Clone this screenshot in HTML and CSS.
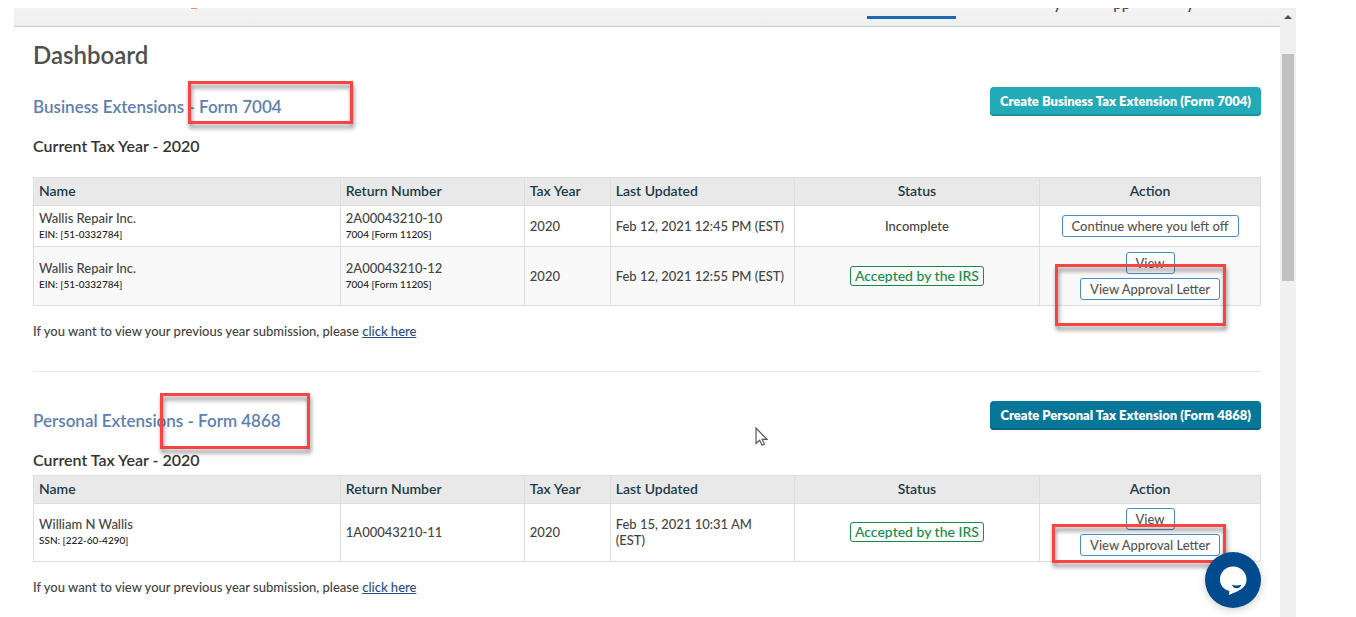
FILE: index.html
```html
<!DOCTYPE html>
<html lang="en">
<head>
<meta charset="utf-8">
<title>Dashboard</title>
<link rel="stylesheet" href="styles.css">
</head>
<body>
<div class="window">
  <div class="page">
    <header class="topbar">
      <span class="logo-edge"></span>
      <nav class="nav" aria-hidden="true">
        <span class="nav-active"></span>
        <span class="nav-item nav-first">y</span>
        <span class="nav-item nav-second">pp</span>
        <span class="nav-item nav-third">y</span>
      </nav>
    </header>
    <main class="content">
      <h1 class="title">Dashboard</h1>

      <section class="section">
        <div class="section-head">
          <h2 class="section-title">Business Extensions - Form 7004</h2>
          <button class="create create-business" type="button">Create Business Tax Extension (Form 7004)</button>
          <span class="mark mark-form-business"></span>
        </div>
        <h3 class="year year-business">Current Tax Year - 2020</h3>
        <div class="table-wrap">
          <table class="returns">
            <colgroup><col class="c-name"><col class="c-number"><col class="c-year"><col class="c-updated"><col class="c-status"><col class="c-action"></colgroup>
            <thead>
              <tr><th>Name</th><th>Return Number</th><th>Tax Year</th><th>Last Updated</th><th class="center">Status</th><th class="center">Action</th></tr>
            </thead>
            <tbody>
              <tr class="row-short">
                <td>Wallis Repair Inc.<small class="sub">EIN: [51-0332784]</small></td>
                <td>2A00043210-10<small class="sub">7004 [Form 1120S]</small></td>
                <td>2020</td>
                <td class="date">Feb 12, 2021 12:45 PM (EST)</td>
                <td class="center">Incomplete</td>
                <td class="center"><div class="actions"><button class="action" type="button">Continue where you left off</button></div></td>
              </tr>
              <tr class="row-tall shaded">
                <td>Wallis Repair Inc.<small class="sub">EIN: [51-0332784]</small></td>
                <td>2A00043210-12<small class="sub">7004 [Form 1120S]</small></td>
                <td>2020</td>
                <td class="date">Feb 12, 2021 12:55 PM (EST)</td>
                <td class="center"><span class="badge">Accepted by the IRS</span></td>
                <td class="center"><div class="actions"><button class="action" type="button">View</button><button class="action" type="button">View Approval Letter</button></div></td>
              </tr>
            </tbody>
          </table>
          <span class="mark mark-letter-business"></span>
        </div>
        <p class="note">If you want to view your previous year submission, please <a class="link" href="#">click here</a></p>
      </section>

      <hr class="divider">

      <section class="section">
        <div class="section-head">
          <h2 class="section-title">Personal Extensions - Form 4868</h2>
          <button class="create create-personal" type="button">Create Personal Tax Extension (Form 4868)</button>
          <span class="mark mark-form-personal"></span>
        </div>
        <h3 class="year year-personal">Current Tax Year - 2020</h3>
        <div class="table-wrap">
          <table class="returns">
            <colgroup><col class="c-name"><col class="c-number"><col class="c-year"><col class="c-updated"><col class="c-status"><col class="c-action"></colgroup>
            <thead>
              <tr><th>Name</th><th>Return Number</th><th>Tax Year</th><th>Last Updated</th><th class="center">Status</th><th class="center">Action</th></tr>
            </thead>
            <tbody>
              <tr class="row-tall">
                <td>William N Wallis<small class="sub">SSN: [222-60-4290]</small></td>
                <td>1A00043210-11</td>
                <td>2020</td>
                <td>Feb 15, 2021 10:31 AM<br>(EST)</td>
                <td class="center"><span class="badge">Accepted by the IRS</span></td>
                <td class="center"><div class="actions"><button class="action" type="button">View</button><button class="action" type="button">View Approval Letter</button></div></td>
              </tr>
            </tbody>
          </table>
          <span class="mark mark-letter-personal"></span>
        </div>
        <p class="note">If you want to view your previous year submission, please <a class="link" href="#">click here</a></p>
      </section>
    </main>
    <button class="chat" type="button" aria-label="Open chat">
      <svg width="56" height="56" viewBox="0 0 56 56"><path d="M28 14.500c7.600 0 13.500 5.600 13.500 13 0 6-4 9.400-9 11.800-2.700 1.300-5.400 2.200-8.500 3.700l.3-4c-5.500-1.400-9.300-5.600-9.300-11.500 0-7.400 5.600-13 13-13z" fill="#fff"/><path d="M27 32.800c3 .8 6.200.8 9.300 0-.7 2.400-2.400 3.500-4.600 3.500s-4-1.100-4.700-3.500z" fill="#004b8d"/></svg>
    </button>
  </div>
  <div class="scrollbar">
    <svg class="arrow" width="8" height="4" viewBox="0 0 8 4"><path d="M0 4 4 0l4 4z" fill="#505050"/></svg>
    <div class="thumb"></div>
  </div>
  <svg class="cursor" width="13" height="20" viewBox="0 0 13 20"><path d="M1 1v15.500l3.700-3.300 2.300 5 2.400-1.100-2.300-4.800h4.800z" fill="#fff" stroke="#55555f" stroke-width="1.200"/></svg>
</div>
</body>
</html>
```
FILE: styles.css
```css
* { box-sizing: border-box; }
body {
  margin: 0;
  background: #fff;
  color: #444;
  font: 500 13px/16px Lato, "Open Sans", sans-serif;
}
button { font-family: inherit; cursor: pointer; }
.window {
  position: relative;
  display: flex;
  height: 100vh;
  padding: 8px 60px 0 14px;
  overflow: hidden;
}
.page { position: relative; flex: 1; min-width: 0; }
.topbar {
  display: flex;
  justify-content: space-between;
  height: 19px;
  padding: 0 86px 0 177px;
  overflow: hidden;
  background: linear-gradient(#f3f3f3, #efefef);
  border-bottom: 1px solid #c9ccd3;
}
.logo-edge { width: 6px; height: 1px; background: #f0925f; }
.nav { display: flex; align-items: flex-start; }
.nav-active { width: 89px; height: 3px; margin-top: 8px; background: #1c69ac; }
.nav-item { height: 16px; margin-top: -13px; font-size: 15px; line-height: 16px; }
.nav-first { margin-left: 98px; }
.nav-second { margin-left: 52px; }
.nav-third { margin-left: 56px; }
.content { padding: 15px 19px 0; }
.title { margin: 0 0 19px; color: #505050; font-size: 24px; line-height: 26px; font-weight: 600; }
.section-head { position: relative; display: flex; justify-content: space-between; align-items: flex-start; }
.section-title { margin: 10px 0 0; color: #5d80b3; font-size: 17px; line-height: 20px; font-weight: 600; }
.create {
  height: 29px;
  padding: 0 10px 2px;
  border: 0;
  border-radius: 4px;
  color: #fff;
  font-size: 13px;
  line-height: 16px;
  font-weight: 800;
}
.create-business { background: #23aab8; box-shadow: inset 0 -2px #1b94a1; }
.create-personal { background: #067799; box-shadow: inset 0 -2px #056480; }
.year { margin: 0; color: #333; font-size: 16px; line-height: 18px; font-weight: 600; }
.year-business { padding: 20px 0 22px; }
.year-personal { padding: 20px 0 6px; }
.table-wrap { position: relative; }
.returns { width: 100%; border-collapse: collapse; table-layout: fixed; }
.c-name { width: 25%; }
.c-number { width: 15%; }
.c-year { width: 7%; }
.c-updated { width: 15%; }
.c-status { width: 20%; }
.c-action { width: 18%; }
.returns th, .returns td { padding: 0 5px 1px; border: 1px solid #ddd; text-align: left; vertical-align: middle; }
.returns th { height: 28px; padding-bottom: 2px; background: #e9e9e9; color: #1c3a48; font-size: 14px; font-weight: 600; }
.returns .center { text-align: center; }
.row-short { height: 41px; }
.row-tall { height: 58px; }
.shaded { height: 59px; background: #f9f9f9; }
.date { white-space: nowrap; }
.sub { display: block; color: #222; font-size: 10px; line-height: 16px; }
.badge { display: inline-block; padding: 1px 4px; border: 1px solid #178a4c; border-radius: 3px; color: #178a4c; font-size: 14px; line-height: 16px; }
.actions { display: flex; flex-direction: column; align-items: center; gap: 4px; }
.action { height: 22px; padding: 0 9px; border: 1px solid #4a8bc2; border-radius: 3px; background: #fff; color: #555; font-size: 13px; line-height: 16px; font-weight: 500; }
.note { margin: 17px 0 0; font-size: 13px; }
.link { color: #1f4f86; }
.divider { margin: 32px 0 29px; border: 0; border-top: 1px solid #e6e6e6; }
.mark {
  position: absolute;
  border: 3px solid #f94444;
  filter: drop-shadow(1px 4px 2px rgba(0, 0, 0, .45));
  pointer-events: none;
}
.mark-form-business { left: 155px; top: -6px; width: 165px; height: 43px; }
.mark-form-personal { left: 127px; top: -8px; width: 150px; height: 56px; }
.mark-letter-business { right: 35px; top: 87px; width: 171px; height: 62px; }
.mark-letter-personal { right: 35px; top: 49px; width: 174px; height: 39px; }
.chat {
  position: absolute;
  right: 19px;
  bottom: 9px;
  width: 56px;
  height: 56px;
  padding: 0;
  border: 0;
  border-radius: 50%;
  background: #004b8d;
  box-shadow: 0 2px 8px rgba(0, 0, 0, .2);
}
.chat svg { display: block; }
.scrollbar { flex: none; width: 16px; padding: 7px 2px 0; background: #f0f0f0; }
.arrow { display: block; margin: 0 auto 35px; }
.thumb { height: 227px; background: #c1c1c1; }
.cursor { position: absolute; left: 755px; top: 427px; }
```
